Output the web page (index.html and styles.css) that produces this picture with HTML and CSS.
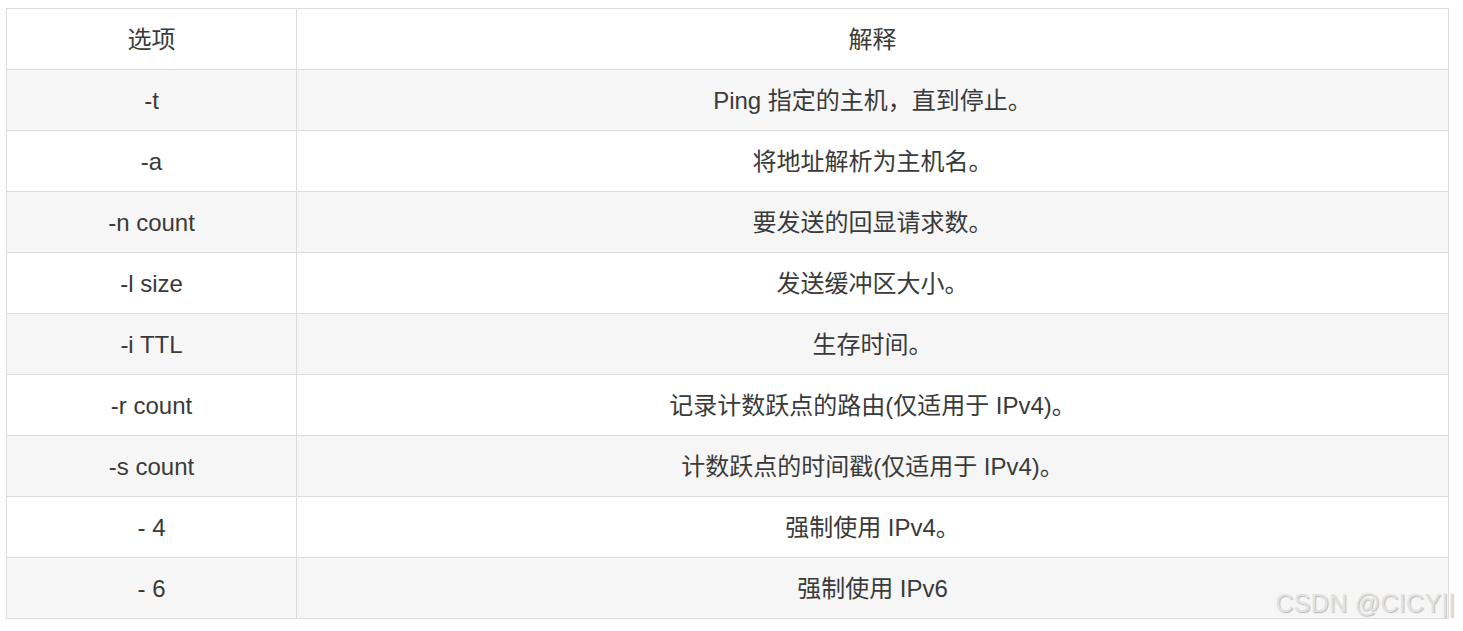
FILE: index.html
```html
<!DOCTYPE html>
<html lang="zh">
<head>
<meta charset="utf-8">
<link rel="stylesheet" href="styles.css">
</head>
<body>
<div class="page">
  <table class="opts">
    <thead>
      <tr><th class="c1">选项</th><th>解释</th></tr>
    </thead>
    <tbody>
      <tr><td>-t</td><td>Ping 指定的主机，直到停止。</td></tr>
      <tr><td>-a</td><td>将地址解析为主机名。</td></tr>
      <tr><td>-n count</td><td>要发送的回显请求数。</td></tr>
      <tr><td>-l size</td><td>发送缓冲区大小。</td></tr>
      <tr><td>-i TTL</td><td>生存时间。</td></tr>
      <tr><td>-r count</td><td>记录计数跃点的路由(仅适用于 IPv4)。</td></tr>
      <tr><td>-s count</td><td>计数跃点的时间戳(仅适用于 IPv4)。</td></tr>
      <tr><td>- 4</td><td>强制使用 IPv4。</td></tr>
      <tr><td>- 6</td><td>强制使用 IPv6</td></tr>
    </tbody>
  </table>
  <div class="watermark">CSDN @CICY||</div>
</div>
</body>
</html>
```
FILE: styles.css
```css
html, body {
  margin: 0;
  padding: 0;
  background: #fff;
}
.page {
  position: relative;
  padding: 8px 0 0 6px;
  width: 1457px;
  height: 623px;
}
.opts {
  border-collapse: collapse;
  width: 1443px;
  font-family: "Liberation Sans", "Noto Sans CJK SC", sans-serif;
  font-size: 24px;
  color: #3a3a3a;
}
.opts th, .opts td {
  border: 1px solid #dddddd;
  height: 59px;
  padding: 1px 0 0;
  text-align: center;
  vertical-align: middle;
  font-weight: normal;
  line-height: 1;
}
.opts .c1 {
  width: 289px;
}
.opts tbody tr:nth-child(odd) {
  background: #f6f6f6;
}
.watermark {
  position: absolute;
  right: 8px;
  top: 589px;
  font-family: "Liberation Sans", sans-serif;
  font-size: 25px;
  color: #e2e2e2;
  text-shadow: 1px 1px 1px #bbb;
  letter-spacing: 0.3px;
}
```
